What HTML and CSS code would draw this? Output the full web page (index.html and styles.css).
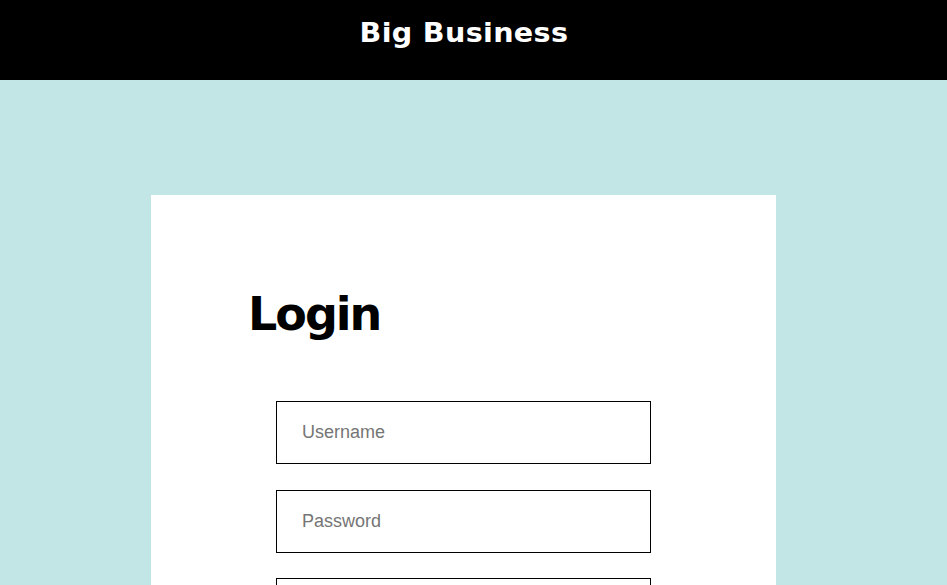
FILE: index.html
```html
<!DOCTYPE html>
<html lang="en">
<head>
<meta charset="utf-8">
<title>Big Business - Login</title>
<link rel="stylesheet" href="styles.css">
</head>
<body>
<header class="site-header">
  <h1 class="brand">Big Business</h1>
</header>
<main class="page">
  <section class="card">
    <h2 class="card-title">Login</h2>
    <form class="login-form">
      <input class="field" type="text" placeholder="Username">
      <input class="field" type="password" placeholder="Password">
      <input class="field" type="email" placeholder="Email">
    </form>
  </section>
</main>
</body>
</html>
```

FILE: styles.css
```css
html, body {
  margin: 0;
  padding: 0;
}
body {
  background: #c2e5e6;
  font-family: "Liberation Sans", Arial, sans-serif;
  min-height: 585px;
  overflow: hidden;
}
.site-header {
  background: #000;
  height: 80px;
  box-sizing: border-box;
  padding: 20px 20px 0 0;
  text-align: center;
}
.brand {
  display: inline-block;
  margin: 0;
  color: #fff;
  font-family: "DejaVu Sans", sans-serif;
  font-weight: bold;
  font-size: 26px;
  line-height: 1;
  letter-spacing: 0.3px;
  transform: scaleX(1.1);
}
.page {
  padding: 115px 20px 0 0;
}
.card {
  background: #fff;
  width: 625px;
  margin: 0 auto;
  box-sizing: border-box;
  padding: 96px 0 40px 0;
  min-height: 500px;
}
.card-title {
  margin: 0 0 64px 97px;
  font-family: "DejaVu Sans", sans-serif;
  font-weight: bold;
  font-size: 46px;
  line-height: 1;
  letter-spacing: -2px;
  color: #000;
}
.login-form {
  display: flex;
  flex-direction: column;
  align-items: center;
  gap: 25.5px;
}
.field {
  width: 375px;
  height: 63px;
  box-sizing: border-box;
  border: 1px solid #000;
  border-radius: 0;
  padding: 0 25px;
  margin: 0;
  font-family: "Liberation Sans", Arial, sans-serif;
  font-size: 18px;
  color: #000;
  background: #fff;
  outline: none;
}
.field::placeholder {
  color: #757575;
  opacity: 1;
}
```
